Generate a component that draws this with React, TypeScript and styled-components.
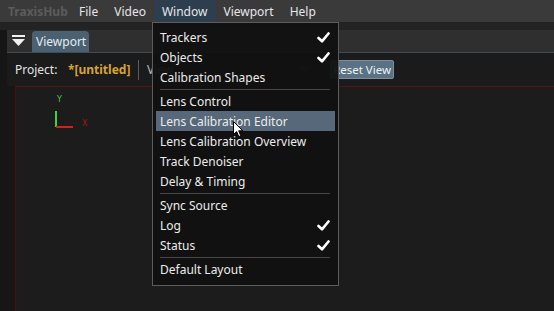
import styled, { createGlobalStyle } from "styled-components";

const GlobalStyle = createGlobalStyle`
  html, body {
    margin: 0;
    padding: 0;
    background: #161616;
    overflow: hidden;
  }
  * {
    box-sizing: border-box;
  }
`;

const Screen = styled.div`
  position: relative;
  width: 554px;
  height: 311px;
  display: flex;
  flex-direction: column;
  background: #161616;
  font-family: "Noto Sans", "Open Sans", sans-serif;
  font-size: 12px;
  color: #e2e2e2;
  overflow: hidden;
`;

const MenuBar = styled.div`
  display: flex;
  align-items: stretch;
  height: 22px;
  background: #3a3a3a;
`;

const Brand = styled.div`
  display: flex;
  align-items: center;
  padding: 0 8px;
  width: 71px;
  font-weight: bold;
  color: #5c5c5c;
`;

const MenuTitle = styled.div<{ $open?: boolean }>`
  display: flex;
  align-items: center;
  padding: 0 8px;
  background: ${(p) => (p.$open ? "#2d3e4f" : "transparent")};
  color: #e6e6e6;
`;

const Gap = styled.div`
  height: 8px;
  background: #232323;
`;

const DockPanel = styled.div`
  flex: 1;
  display: flex;
  flex-direction: column;
  margin-left: 7px;
`;

const TabStrip = styled.div`
  display: flex;
  align-items: flex-end;
  height: 23px;
  padding-left: 5px;
  gap: 7px;
  background: #2f2f2f;
  border-bottom: 1px solid #3f4b52;
`;

const TabIcon = styled.div`
  align-self: center;
  display: flex;
  width: 13px;
`;

const Tab = styled.div`
  display: flex;
  align-items: center;
  height: 21px;
  padding: 0 4px;
  width: 57px;
  background: #4b6172;
  border-radius: 4px 4px 0 0;
  color: #e4ecf2;
`;

const Toolbar = styled.div`
  display: flex;
  align-items: center;
  height: 33px;
  padding-left: 8px;
  background: #1b1b1b;
`;

const Label = styled.span`
  color: #e4e4e4;
  width: 53px;
`;

const ProjectName = styled.span`
  color: #d9a52e;
  font-weight: bold;
  width: 70px;
`;

const Divider = styled.div`
  width: 1px;
  height: 20px;
  background: #5a5a5a;
  margin-right: 8px;
`;

const Combo = styled.div`
  display: flex;
  align-items: center;
  justify-content: space-between;
  width: 178px;
  height: 20px;
  padding-right: 14px;
  color: #bbbbbb;
`;

const ComboArrow = styled.div`
  width: 0;
  height: 0;
  border-left: 6px solid transparent;
  border-right: 6px solid transparent;
  border-top: 7px solid #3c3c3c;
`;

const ToolButton = styled.div`
  display: flex;
  align-items: center;
  height: 19px;
  margin-left: 5px;
  padding: 0 2px;
  background: #5a7284;
  border: 1px solid #7b8f9c;
  border-radius: 2px;
  color: #eef2f5;
  font-size: 11.5px;
`;

const Viewport = styled.div`
  position: relative;
  flex: 1;
  margin-left: 8px;
  background: #1c1c1c;
  border-top: 1px solid #5c1010;
  border-left: 1px solid #4a1010;
`;

const AxisLabel = styled.span<{ $color: string }>`
  position: absolute;
  font-family: "DejaVu Sans", sans-serif;
  font-size: 8px;
  line-height: 8px;
  color: ${(p) => p.$color};
`;

const AxisLine = styled.div<{ $color: string }>`
  position: absolute;
  background: ${(p) => p.$color};
`;

const Popup = styled.div`
  position: absolute;
  left: 152px;
  top: 22px;
  width: 187px;
  padding: 4px 3px 6px;
  background: rgba(17, 17, 17, 0.95);
  border: 1px solid #5c5c5c;
  display: flex;
  flex-direction: column;
`;

const Item = styled.div<{ $active?: boolean }>`
  display: flex;
  align-items: center;
  justify-content: space-between;
  height: 20px;
  padding: 0 5px 0 4px;
  background: ${(p) => (p.$active ? "#56687a" : "transparent")};
  color: #ececec;
  white-space: nowrap;
`;

const Separator = styled.div`
  height: 1px;
  margin: 2px 5px 1px 4px;
  background: #474747;
`;

const Cursor = styled.svg`
  position: absolute;
  left: 233px;
  top: 121px;
`;

type Entry = { label?: string; checked?: boolean; active?: boolean; sep?: boolean };

const entries: Entry[] = [
  { label: "Trackers", checked: true },
  { label: "Objects", checked: true },
  { label: "Calibration Shapes" },
  { sep: true },
  { label: "Lens Control" },
  { label: "Lens Calibration Editor", active: true },
  { label: "Lens Calibration Overview" },
  { label: "Track Denoiser" },
  { label: "Delay & Timing" },
  { sep: true },
  { label: "Sync Source" },
  { label: "Log", checked: true },
  { label: "Status", checked: true },
  { sep: true },
  { label: "Default Layout" },
];

function CheckMark() {
  return (
    <svg width="13" height="11" viewBox="0 0 13 11">
      <path
        d="M1.5 6 L5 9.3 L11.5 1.5"
        fill="none"
        stroke="#ffffff"
        strokeWidth="2.6"
        strokeLinecap="round"
        strokeLinejoin="round"
      />
    </svg>
  );
}

export default function App() {
  return (
    <Screen>
      <GlobalStyle />
      <MenuBar>
        <Brand>TraxisHub</Brand>
        <MenuTitle>File</MenuTitle>
        <MenuTitle>Video</MenuTitle>
        <MenuTitle $open>Window</MenuTitle>
        <MenuTitle>Viewport</MenuTitle>
        <MenuTitle>Help</MenuTitle>
      </MenuBar>
      <Gap />
      <DockPanel>
        <TabStrip>
          <TabIcon>
            <svg width="13" height="12" viewBox="0 0 13 12">
              <rect x="0" y="0" width="13" height="2" fill="#f2f2f2" />
              <path d="M0 4 H13 L6.5 11 Z" fill="#f2f2f2" />
            </svg>
          </TabIcon>
          <Tab>Viewport</Tab>
        </TabStrip>
        <Toolbar>
          <Label>Project:</Label>
          <ProjectName>*[untitled]</ProjectName>
          <Divider />
          <Combo>
            <span>View</span>
            <ComboArrow />
          </Combo>
          <ToolButton>Reset View</ToolButton>
        </Toolbar>
        <Viewport>
          <AxisLabel $color="#4cc84c" style={{ left: 41, top: 9 }}>
            Y
          </AxisLabel>
          <AxisLine $color="#3fd43f" style={{ left: 39, top: 24, width: 2, height: 16 }} />
          <AxisLine $color="#e01a1a" style={{ left: 40, top: 39, width: 17, height: 2 }} />
          <AxisLabel $color="#a01818" style={{ left: 66, top: 33 }}>
            X
          </AxisLabel>
        </Viewport>
      </DockPanel>

      <Popup>
        {entries.map((e, i) =>
          e.sep ? (
            <Separator key={i} />
          ) : (
            <Item key={i} $active={e.active}>
              <span>{e.label}</span>
              {e.checked && <CheckMark />}
            </Item>
          )
        )}
      </Popup>

      <Cursor width="11" height="17" viewBox="0 0 11 17">
        <path
          d="M0.5 0.5 L0.5 13.5 L3.6 10.6 L5.8 15.6 L7.8 14.7 L5.7 9.8 L9.8 9.8 Z"
          fill="#ffffff"
          stroke="#000000"
          strokeWidth="1"
          strokeLinejoin="round"
        />
      </Cursor>
    </Screen>
  );
}
